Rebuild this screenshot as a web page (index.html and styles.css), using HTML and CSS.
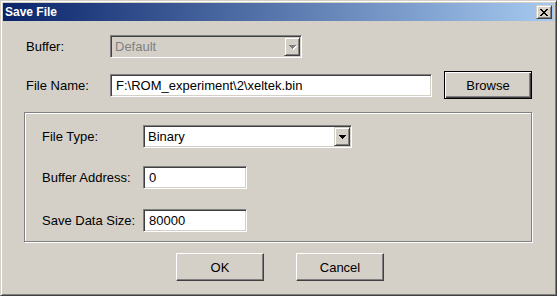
FILE: index.html
```html
<!DOCTYPE html>
<html>
  <head>
    <meta charset="UTF-8">
    <title>Save File</title>
    <link rel="stylesheet" href="styles.css">
  </head>
  <body>
    <div class="window">
      <div class="titlebar">
        <span class="title">Save File</span>
        <div class="close-btn">
          <svg width="8" height="7" viewBox="0 0 8 7" shape-rendering="crispEdges"><path fill="#000" d="M0 0h2v1H0zM6 0h2v1H6zM1 1h2v1H1zM5 1h2v1H5zM2 2h4v1H2zM3 3h2v1H3zM2 4h4v1H2zM1 5h2v1H1zM5 5h2v1H5zM0 6h2v1H0zM6 6h2v1H6z"/></svg>
        </div>
      </div>

      <div class="client">
        <div class="row row-buffer">
          <span class="label label-outer">Buffer:</span>
          <div class="combo combo-buffer disabled">
            <span class="combo-text">Default</span>
            <div class="drop-btn">
              <svg width="8" height="5" viewBox="0 0 8 5" shape-rendering="crispEdges"><path fill="#fff" d="M1 1h7v1H1zM2 2h5v1H2zM3 3h3v1H3zM4 4h1v1H4z"/><path fill="#808080" d="M0 0h7v1H0zM1 1h5v1H1zM2 2h3v1H2zM3 3h1v1H3z"/></svg>
            </div>
          </div>
        </div>

        <div class="row row-file">
          <span class="label label-outer">File Name:</span>
          <div class="edit edit-file">F:\ROM_experiment\2\xeltek.bin</div>
          <div class="button default btn-browse">Browse</div>
        </div>

        <div class="group">
          <div class="row row-type">
            <span class="label label-inner">File Type:</span>
            <div class="combo combo-type">
              <span class="combo-text">Binary</span>
              <div class="drop-btn">
                <svg width="7" height="4" viewBox="0 0 7 4" shape-rendering="crispEdges"><path fill="#000" d="M0 0h7v1H0zM1 1h5v1H1zM2 2h3v1H2zM3 3h1v1H3z"/></svg>
              </div>
            </div>
          </div>
          <div class="row row-addr">
            <span class="label label-inner">Buffer Address:</span>
            <div class="edit edit-small">0</div>
          </div>
          <div class="row row-size">
            <span class="label label-inner">Save Data Size:</span>
            <div class="edit edit-small">80000</div>
          </div>
        </div>

        <div class="actions">
          <div class="button">OK</div>
          <div class="button">Cancel</div>
        </div>
      </div>
    </div>
  </body>
</html>
```

FILE: styles.css
```css
* {
  box-sizing:border-box;
}
body {
  margin:0;
  background-color:#d4d0c8;
  font-family:"Liberation Sans", Arial, sans-serif;
  font-size:13px;
  color:#000;
}
.window {
  width:557px;
  height:296px;
  padding:2px;
  background-color:#d4d0c8;
  border:1px solid;
  border-color:#d4d0c8 #404040 #404040 #d4d0c8;
  box-shadow:inset 1px 1px 0 #fff, inset -1px -1px 0 #808080;
}
.titlebar {
  height:18px;
  display:flex;
  align-items:center;
  padding:0 2px 0 2px;
  background:linear-gradient(to right, #0a246a, #a6caf0);
}
.title {
  color:#fff;
  font-weight:bold;
  font-size:12px;
}
.close-btn {
  margin-left:auto;
  width:16px;
  height:14px;
  display:flex;
  align-items:center;
  justify-content:center;
  padding:1px 0 0 0;
  background-color:#d4d0c8;
  border:1px solid;
  border-color:#d4d0c8 #404040 #404040 #d4d0c8;
  box-shadow:inset 1px 1px 0 #fff, inset -1px -1px 0 #808080;
}
.client {
  padding-top:14px;
}
.row {
  display:flex;
  align-items:center;
}
.row-buffer {
  height:23px;
  padding-left:23px;
}
.row-file {
  height:28px;
  margin-top:13px;
  padding-left:23px;
}
.label-outer {
  width:84px;
}
.label-inner {
  width:101px;
}

/* sunken fields */
.edit, .combo {
  height:23px;
  background-color:#fff;
  border:1px solid;
  border-color:#808080 #fff #fff #808080;
  box-shadow:inset 1px 1px 0 #404040, inset -1px -1px 0 #d4d0c8;
  white-space:nowrap;
}
.edit {
  padding:0 4px 0 5px;
  line-height:21px;
}
.edit-file {
  width:322px;
}
.edit-small {
  width:104px;
}
.combo {
  display:flex;
  align-items:center;
  padding:1px;
}
.combo-text {
  flex:1;
  padding-left:3px;
}
.combo-buffer {
  width:192px;
}
.combo-type {
  width:209px;
}
.combo.disabled {
  background-color:#d4d0c8;
  color:#808080;
}
.drop-btn {
  width:16px;
  height:19px;
  display:flex;
  align-items:center;
  justify-content:center;
  padding:1px 0 0 0;
  background-color:#d4d0c8;
  border:1px solid;
  border-color:#d4d0c8 #404040 #404040 #d4d0c8;
  box-shadow:inset 1px 1px 0 #fff, inset -1px -1px 0 #808080;
}
.disabled .drop-btn {
  padding:2px 0 0 1px;
}

/* push buttons */
.button {
  width:88px;
  height:28px;
  display:flex;
  align-items:center;
  justify-content:center;
  background-color:#d4d0c8;
  border:1px solid;
  border-color:#fff #404040 #404040 #fff;
  box-shadow:inset -1px -1px 0 #808080;
}
.button.default {
  border:1px solid #000;
  box-shadow:inset 1px 1px 0 #fff, inset -1px -1px 0 #404040, inset -2px -2px 0 #808080;
}
.btn-browse {
  margin-left:12px;
}

/* group box */
.group {
  margin:13px 0 0 21px;
  width:508px;
  height:130px;
  padding:12px 0 0 17px;
  border:1px solid #808080;
  box-shadow:1px 1px 0 #fff, inset 1px 1px 0 #fff;
}
.row-type {
  height:23px;
}
.row-addr {
  height:23px;
  margin-top:18px;
}
.row-size {
  height:23px;
  margin-top:20px;
}
.actions {
  display:flex;
  gap:32px;
  margin-top:11px;
  padding-left:173px;
}
```
